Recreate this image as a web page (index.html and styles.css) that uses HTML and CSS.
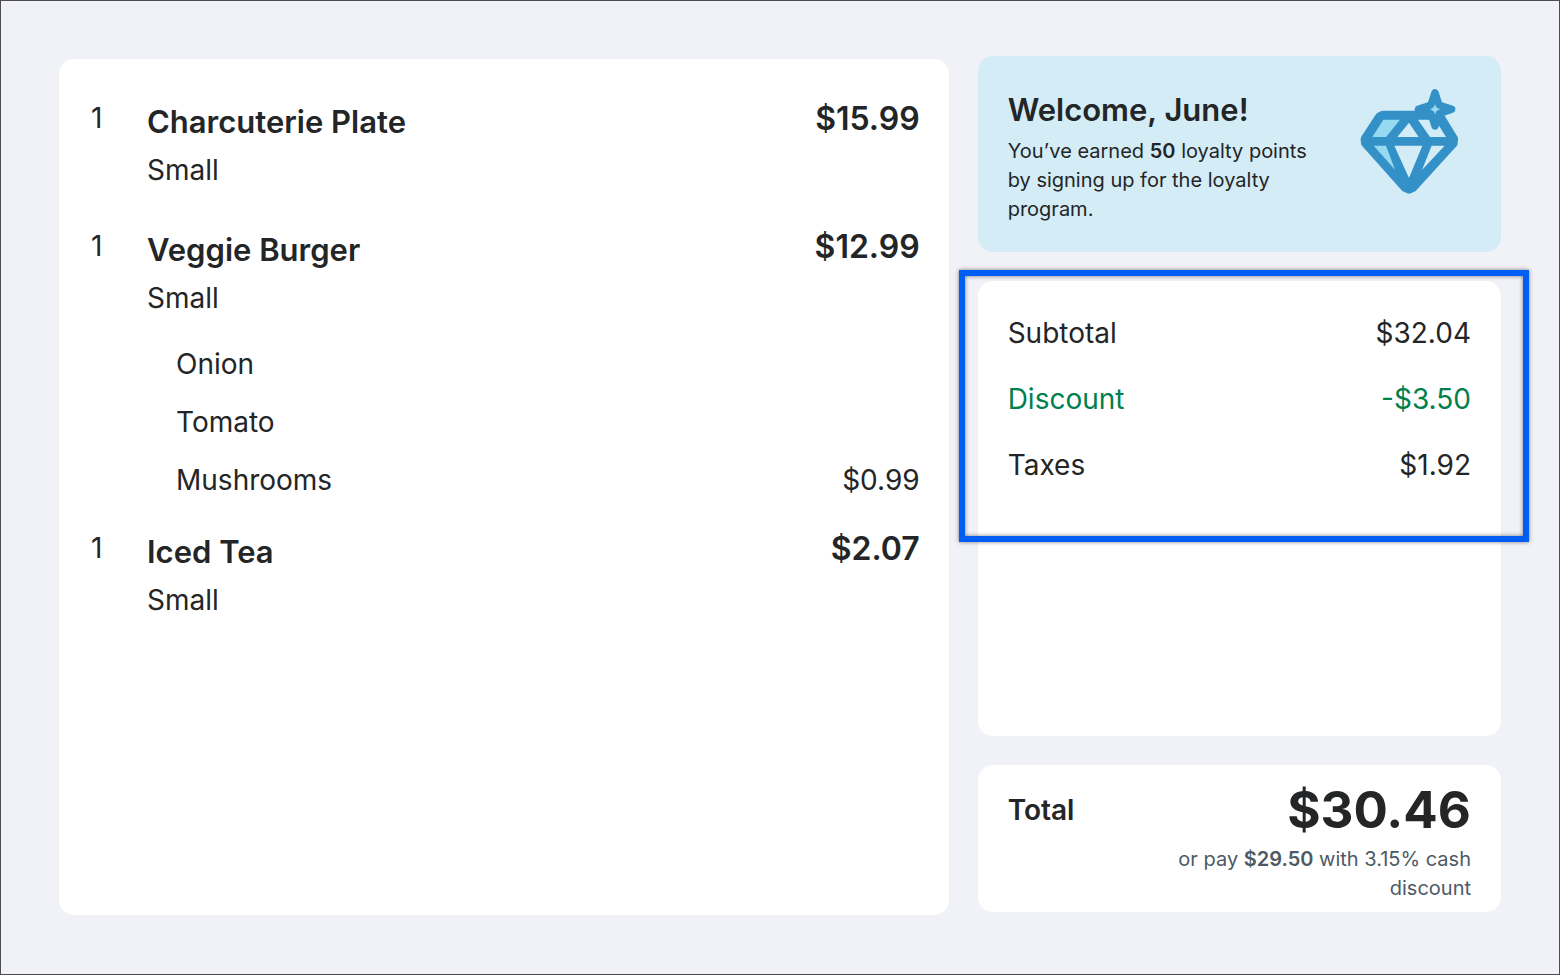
FILE: index.html
```
<!DOCTYPE html>
<html lang="en">
<head>
    <meta charset="UTF-8">
    <meta name="viewport" content="width=device-width, initial-scale=1.0">
    <title>Your Order</title>
    <link rel="stylesheet" href="styles.css">
</head>
<body>
    <main class="display">
        <section class="card order" aria-label="Order items">
            <ul class="items">
                <li class="item">
                    <span class="qty">1</span>
                    <h2 class="name">Charcuterie Plate</h2>
                    <span class="price">$15.99</span>
                    <p class="size">Small</p>
                </li>
                <li class="item">
                    <span class="qty">1</span>
                    <h2 class="name">Veggie Burger</h2>
                    <span class="price">$12.99</span>
                    <p class="size">Small</p>
                    <ul class="modifiers">
                        <li><span>Onion</span></li>
                        <li><span>Tomato</span></li>
                        <li><span>Mushrooms</span><span>$0.99</span></li>
                    </ul>
                </li>
                <li class="item">
                    <span class="qty">1</span>
                    <h2 class="name">Iced Tea</h2>
                    <span class="price">$2.07</span>
                    <p class="size">Small</p>
                </li>
            </ul>
        </section>

        <div class="sidebar">
            <section class="welcome">
                <div class="welcome-text">
                    <h1>Welcome, June!</h1>
                    <p>You’ve earned <strong>50</strong> loyalty points by signing up for the loyalty program.</p>
                </div>
                <svg class="diamond" viewBox="60 37 294 318" aria-hidden="true">
                    <path class="line" d="M130 119 L119 124 L76 190 L77 202 L196 335 L207 340 L218 335 L339 202 L340 190 L297 119 Z"/>
                    <path class="tint" d="M130 132 H180 L138 184 H97 Z M101 210 H138 L165 282 Z"/>
                    <path class="clear" d="M207 141 L236 184 H172 Z M163 210 H247 L207 307 Z M275 210 H314 L246 283 Z M234 132 H266 L285 140 L297 150 L318 184 H270 Z"/>
                    <path class="star" d="M285 51 L295 82 Q297 88 303 90 L335 101 L303 112 Q297 114 295 120 L285 151 L275 120 Q273 114 267 112 L235 101 L267 90 Q273 88 275 82 Z"/>
                    <path class="tint" d="M285 85 Q288 98 301 101 Q288 104 285 117 Q282 104 269 101 Q282 98 285 85 Z"/>
                </svg>
            </section>

            <section class="card summary" aria-label="Order summary">
                <dl class="charges">
                    <div class="charge">
                        <dt>Subtotal</dt>
                        <dd>$32.04</dd>
                    </div>
                    <div class="charge discount">
                        <dt>Discount</dt>
                        <dd>-$3.50</dd>
                    </div>
                    <div class="charge">
                        <dt>Taxes</dt>
                        <dd>$1.92</dd>
                    </div>
                </dl>
            </section>

            <section class="card total">
                <div class="total-row">
                    <h2>Total</h2>
                    <strong class="amount">$30.46</strong>
                </div>
                <p class="cash-note">or pay <strong>$29.50</strong> with 3.15% cash discount</p>
            </section>
        </div>
    </main>
</body>
</html>
```
FILE: styles.css
```
* {
    margin: 0;
    padding: 0;
    box-sizing: border-box;
}

body {
    font-family: Inter, 'Liberation Sans', sans-serif;
    font-size: 28px;
    color: #232526;
    background-color: #f1f2f7;
}

ul {
    list-style: none;
}

.display {
    display: grid;
    grid-template-columns: 17fr 10fr;
    gap: 29px;
    min-height: 100vh;
    padding: 55px 58px 59px;
    border: 1px solid #4d4d50;
}

.card {
    background-color: #fff;
    border-radius: 15px;
}

/* Order items */
.order {
    margin-top: 3px;
    padding: 38px 29px 38px 32px;
}

.items {
    display: flex;
    flex-direction: column;
    gap: 18px;
}

.item {
    display: grid;
    grid-template-columns: 56px 1fr auto;
}

.qty,
.price {
    line-height: 43px;
}

.name {
    font-size: 31px;
    font-weight: 600;
    line-height: 49px;
}

.price {
    font-size: 32px;
    font-weight: 600;
}

.size {
    grid-column: 2 / -1;
    line-height: 49px;
    margin-bottom: 12px;
}

.modifiers {
    grid-column: 2 / -1;
    padding-left: 29px;
}

.modifiers li {
    display: flex;
    justify-content: space-between;
    line-height: 58px;
}

/* Right column */
.sidebar {
    display: flex;
    flex-direction: column;
    gap: 29px;
    margin-bottom: 3px;
}

.welcome {
    display: flex;
    justify-content: space-between;
    padding: 32px 43px 28px 30px;
    background-color: #d4ecf6;
    border-radius: 15px;
}

.welcome-text {
    max-width: 310px;
}

.welcome h1 {
    font-size: 31px;
    font-weight: 600;
    line-height: 44px;
    margin-bottom: 5px;
}

.welcome p {
    font-size: 20px;
    line-height: 29px;
}

.welcome strong,
.cash-note strong {
    font-weight: 600;
}

.diamond {
    flex: none;
    width: 98px;
    height: 106px;
}

.diamond .line {
    fill: #3391c7;
    stroke: #3391c7;
    stroke-width: 28;
    stroke-linejoin: round;
}

.diamond .star {
    fill: #3391c7;
    stroke: #3391c7;
    stroke-width: 22;
    stroke-linejoin: round;
}

.diamond .tint {
    fill: #95daf0;
}

.diamond .clear {
    fill: #d4ecf6;
}

.summary {
    flex: 1;
}

.charges {
    position: relative;
    padding: 19px 30px 33px;
}

/* Callout frame over the charges */
.charges::after {
    content: '';
    position: absolute;
    inset: -11px -28px -11px -19px;
    border: 6px solid #005ff2;
    box-shadow: 0 0 4px rgba(0, 0, 0, 0.5), inset 0 0 4px rgba(0, 0, 0, 0.5);
}

.charge {
    display: flex;
    justify-content: space-between;
    line-height: 66px;
}

.discount {
    color: #00804c;
}

.total {
    padding: 10px 30px 9px;
}

.total-row {
    display: flex;
    justify-content: space-between;
    line-height: 70px;
}

.total h2 {
    font-size: 28px;
    font-weight: 600;
}

.amount {
    font-size: 51px;
    font-weight: 700;
}

.cash-note {
    max-width: 310px;
    margin-left: auto;
    font-size: 20px;
    line-height: 29px;
    text-align: right;
    color: #4d5a66;
}
```
